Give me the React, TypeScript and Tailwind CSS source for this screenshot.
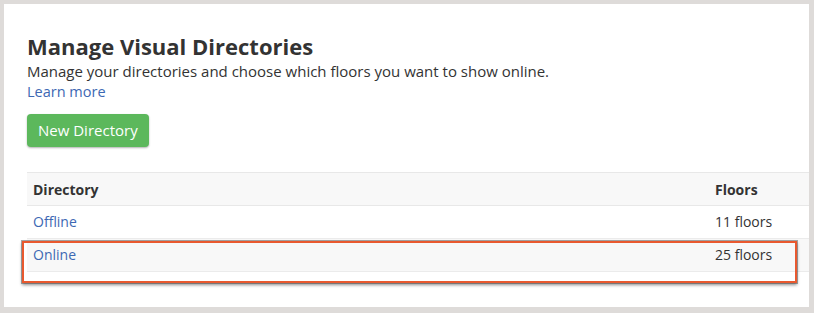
export default function App() {
  const rows = [
    { name: 'Offline', floors: '11 floors' },
    { name: 'Online', floors: '25 floors' },
  ]

  return (
    <div className="h-[313px] w-[814px] bg-[#dedbd9] pt-[4px] pl-[4px] pr-[5px] pb-[6px] font-['Open_Sans',sans-serif]">
      <div className="relative h-full w-full overflow-hidden bg-white pl-[23px] pt-[27px]">
        {/* Header */}
        <h1 className="text-[22px] font-bold leading-[30px] text-[#333333]">Manage Visual Directories</h1>
        <p className="text-[15px] leading-[20px] text-[#333333]">
          Manage your directories and choose which floors you want to show online.
        </p>
        <a href="#" className="block w-fit text-[14.5px] leading-[22px] text-[#3d68b3]">
          Learn more
        </a>

        <button className="mt-[11px] h-[33px] rounded-[4px] bg-[#5cb85c] px-[11px] text-[15px] text-white shadow-[0_1px_2px_rgba(0,0,0,0.3)]">
          New Directory
        </button>

        {/* Table */}
        <table className="mt-[25px] w-[790px] border-collapse text-left text-[14px] text-[#333333]">
          <thead>
            <tr className="h-[33px] border-t border-b border-[#e8e8e8] bg-[#f8f8f8]">
              <th className="pl-[6px] font-bold">Directory</th>
              <th className="w-[104px] pl-[2px] font-bold">Floors</th>
            </tr>
          </thead>
          <tbody>
            {rows.map((row, i) => (
              <tr
                key={row.name}
                className={`h-[33px] border-b border-[#ebebeb] ${i % 2 === 1 ? 'bg-[#f8f8f8]' : 'bg-white'}`}
              >
                <td className="pl-[6px] align-top pt-[5px]">
                  <a href="#" className="text-[#3d68b3]">{row.name}</a>
                </td>
                <td className="pl-[2px] align-top pt-[5px]">{row.floors}</td>
              </tr>
            ))}
          </tbody>
        </table>

        {/* Highlight annotation */}
        <div className="pointer-events-none absolute left-[18px] top-[237px] h-[42px] w-[775px] border-2 border-[#e9592f] shadow-[0_0_0_1px_rgba(80,80,80,0.5),0_2px_3px_rgba(0,0,0,0.45)]" />
      </div>
    </div>
  )
}
